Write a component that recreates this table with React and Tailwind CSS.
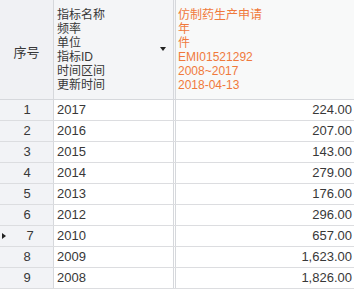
import React from "react";

const rows = [
  ["1", "2017", "224.00"],
  ["2", "2016", "207.00"],
  ["3", "2015", "143.00"],
  ["4", "2014", "279.00"],
  ["5", "2013", "176.00"],
  ["6", "2012", "296.00"],
  ["7", "2010", "657.00"],
  ["8", "2009", "1,623.00"],
  ["9", "2008", "1,826.00"],
];

const labels = ["指标名称", "频率", "单位", "指标ID", "时间区间", "更新时间"];
const values = ["仿制药生产申请", "年", "件", "EMI01521292", "2008~2017", "2018-04-13"];

export default function App() {
  return (
    <div
      className="w-[354px] h-[289px] overflow-hidden bg-white text-[#383838]"
      style={{ fontFamily: '"Liberation Sans", "Noto Sans CJK SC", sans-serif' }}
    >
      {/* header */}
      <div className="flex h-[100px] border-b border-[#d6d8dc]">
        <div className="w-[54px] shrink-0 flex items-center justify-center bg-[#f0f1f4] border-r border-[#d6d8dc] text-[13px] pt-[6px]">
          序号
        </div>
        <div className="w-[122px] shrink-0 relative bg-[#f4f5f7] border-r-[3px] border-double border-[#d6d8dc] pl-[3px] pt-[8px] text-[12px] leading-[14px]">
          {labels.map((l) => (
            <div key={l}>{l}</div>
          ))}
          <span className="absolute right-[7px] top-[47px] w-0 h-0 border-l-[3px] border-r-[3px] border-t-[4px] border-l-transparent border-r-transparent border-t-[#222]"></span>
        </div>
        <div className="flex-1 bg-[#f8f9f9] pl-[2px] pt-[8px] text-[12px] leading-[14px] text-[#f0793c]">
          {values.map((v) => (
            <div key={v}>{v}</div>
          ))}
        </div>
      </div>

      {/* rows */}
      {rows.map(([n, y, v]) => (
        <div key={n} className="flex h-[21px] border-b border-[#dcdde0] text-[13px] leading-[20px]">
          <div
            className={
              "w-[54px] shrink-0 relative bg-[#f2f3f6] border-r border-[#d6d8dc] text-center " +
              (n === "7" ? "pl-[7px]" : "pl-[1px]")
            }
          >
            {n === "7" && (
              <span className="absolute left-[2px] top-[7px] w-0 h-0 border-t-[3px] border-b-[3px] border-l-[4px] border-t-transparent border-b-transparent border-l-[#222]"></span>
            )}
            {n}
          </div>
          <div className="w-[122px] shrink-0 border-r-[3px] border-double border-[#d6d8dc] pl-[3px]">{y}</div>
          <div className="flex-1 text-right pr-[2px]">{v}</div>
        </div>
      ))}
    </div>
  );
}
